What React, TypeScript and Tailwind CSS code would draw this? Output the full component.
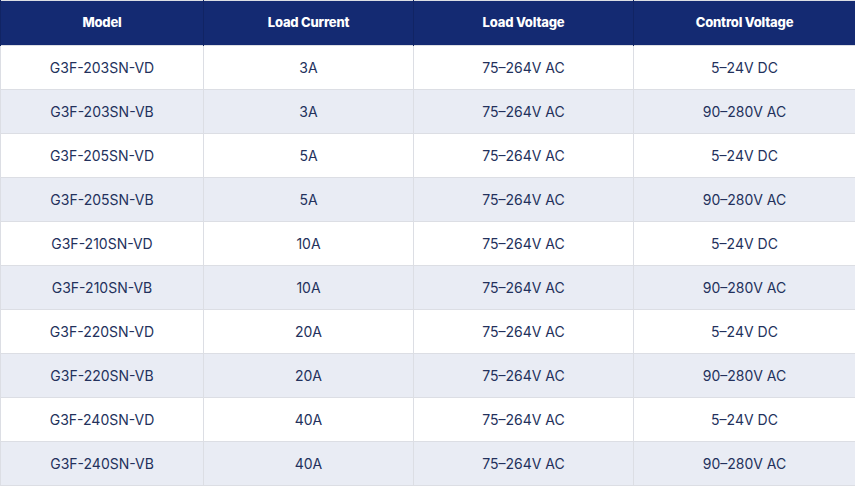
const rows = [
  ['G3F-203SN-VD', '3A', '75–264V AC', '5–24V DC'],
  ['G3F-203SN-VB', '3A', '75–264V AC', '90–280V AC'],
  ['G3F-205SN-VD', '5A', '75–264V AC', '5–24V DC'],
  ['G3F-205SN-VB', '5A', '75–264V AC', '90–280V AC'],
  ['G3F-210SN-VD', '10A', '75–264V AC', '5–24V DC'],
  ['G3F-210SN-VB', '10A', '75–264V AC', '90–280V AC'],
  ['G3F-220SN-VD', '20A', '75–264V AC', '5–24V DC'],
  ['G3F-220SN-VB', '20A', '75–264V AC', '90–280V AC'],
  ['G3F-240SN-VD', '40A', '75–264V AC', '5–24V DC'],
  ['G3F-240SN-VB', '40A', '75–264V AC', '90–280V AC'],
];

const headers = ['Model', 'Load Current', 'Load Voltage', 'Control Voltage'];
const widths = ['w-[203px]', 'w-[210px]', 'w-[220px]', 'w-[222px]'];

export default function App() {
  return (
    <div className="w-[855px] bg-white font-['Inter',sans-serif]">
      <table className="w-[855px] table-fixed border-collapse border border-[#dcdee4]">
        <thead>
          <tr className="h-[45px] bg-[#142a72]">
            {headers.map((h, i) => (
              <th
                key={h}
                className={`${widths[i]} border-x border-[#112464] text-center text-[13px] font-extrabold tracking-[-0.2px] text-white`}
              >
                {h}
              </th>
            ))}
          </tr>
        </thead>
        <tbody>
          {rows.map((r, i) => (
            <tr key={r[0]} className={`h-[44px] ${i % 2 ? 'bg-[#e9ecf4]' : 'bg-white'}`}>
              {r.map((c, j) => (
                <td
                  key={j}
                  className="border border-[#dcdee4] text-center text-[14px] font-normal text-[#23315c]"
                >
                  {c}
                </td>
              ))}
            </tr>
          ))}
        </tbody>
      </table>
    </div>
  );
}
